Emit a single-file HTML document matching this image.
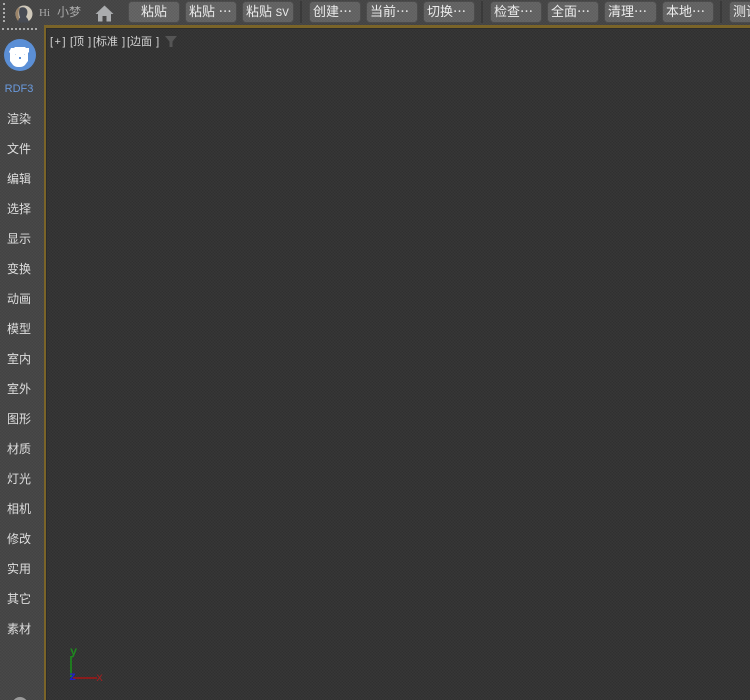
<!DOCTYPE html>
<html><head><meta charset="utf-8">
<style>
html,body{margin:0;padding:0;background:#444}
#r{position:relative;width:750px;height:700px;overflow:hidden;background:#454545;background-image:repeating-conic-gradient(rgba(255,255,255,.025) 0 25%,rgba(0,0,0,.035) 0 50%);background-size:3px 3px;font-family:"Liberation Sans","Noto Sans CJK SC",sans-serif;color:#e0e0e0}
.b{position:absolute;top:2px;height:20px;background:#626262;background-image:repeating-conic-gradient(rgba(255,255,255,.03) 0 25%,rgba(0,0,0,.03) 0 50%);background-size:3px 3px;border-radius:3px;box-shadow:0 0 0 1px #4c4c4c;font-size:13px;line-height:20px;color:#ececec;white-space:nowrap;overflow:hidden;padding-left:3px;box-sizing:border-box}
.s{position:absolute;top:1px;width:2px;height:22px;background:#3a3a3a}
.m{position:absolute;left:0;width:38px;text-align:center;font-size:12px;line-height:16px;color:#dedede;white-space:nowrap}
#v{position:absolute;left:44px;top:25px;width:706px;height:675px;box-sizing:border-box;border-left:2px solid #7a6428;border-top:3px solid #7a6428;background:#323232;background-image:repeating-conic-gradient(rgba(255,255,255,.025) 0 25%,rgba(0,0,0,.04) 0 50%);background-size:3px 3px;box-shadow:inset 1px 1px 0 #2c2c2c}
.t{position:absolute;top:35px;font-size:11px;line-height:14px;color:#d4d4d4;white-space:nowrap;word-spacing:1px}
</style></head><body><div id="r">
<div style="position:absolute;left:3px;top:3px;width:2px;height:19px;border-left:2px dotted #aaa;box-sizing:border-box"></div>
<div style="position:absolute;left:2px;top:28px;width:35px;height:2px;border-top:2px dotted #aaa;box-sizing:border-box"></div>
<svg style="position:absolute;left:14px;top:4px" width="20" height="20" viewBox="0 0 20 20"><circle cx="10" cy="10" r="8.500" fill="#cfc8ba"/><path d="M3.500 4.500C1 8 1 13 4 17l2-1C4 12 4 8 6 3z" fill="#9c8468"/><path d="M6 4c3-1.500 6-.5 7 2 1 2.500 0 5-1 7 1.500 1 2.500 3 3 5.500H4c0-2.500 1-4 2-5-1-3-1.500-7 0-9.500z" fill="#474b54"/></svg>
<div style="position:absolute;left:39px;top:6px;font:11px/14px 'Liberation Serif',serif;color:#a8a8a8">Hi</div>
<div style="position:absolute;left:57px;top:4px;font-size:12px;line-height:16px;color:#a8a8a8">小梦</div>
<svg style="position:absolute;left:95px;top:5px" width="19" height="17" viewBox="0 0 19 17"><path d="M9.500 .500 18.500 9H16v7.500h-4.500V11h-4v5.500H3V9H.500z" fill="#aaacae"/></svg>
<div class="b" style="left:129px;width:50px;text-align:center;padding:0">粘贴</div>
<div class="b" style="left:186px;width:50px">粘贴 ⋯</div>
<div class="b" style="left:243px;width:50px">粘贴 <span style="font:11px 'Liberation Mono',monospace">SV</span></div>
<div class="s" style="left:300px"></div>
<div class="b" style="left:310px;width:50px">创建⋯</div>
<div class="b" style="left:367px;width:50px">当前⋯</div>
<div class="b" style="left:424px;width:50px">切换⋯</div>
<div class="s" style="left:481px"></div>
<div class="b" style="left:491px;width:50px">检查⋯</div>
<div class="b" style="left:548px;width:50px">全面⋯</div>
<div class="b" style="left:605px;width:51px">清理⋯</div>
<div class="b" style="left:663px;width:50px">本地⋯</div>
<div class="s" style="left:720px"></div>
<div class="b" style="left:730px;width:40px">测试</div>
<div id="v"></div>
<svg style="position:absolute;left:4px;top:39px" width="32" height="32" viewBox="0 0 32 32"><circle cx="16" cy="16" r="16" fill="#5b8fd6"/><path d="M7 9h3l1-1h10l1 1h3v4l-1 1v8l-3 4q-2 2-5 2h-2q-3 0-5-2l-3-4v-8l-1-1z" fill="#fff"/><rect x="15" y="18" width="2" height="2" fill="#5b8fd6"/><rect x="11" y="15" width="1" height="1" fill="#c8d8f0"/><rect x="20" y="15" width="1" height="1" fill="#c8d8f0"/></svg>
<div class="m" style="top:81px;font-size:11px;color:#6a9ade">RDF3</div>
<div class="m" style="top:111px">渲染</div>
<div class="m" style="top:141px">文件</div>
<div class="m" style="top:171px">编辑</div>
<div class="m" style="top:201px">选择</div>
<div class="m" style="top:231px">显示</div>
<div class="m" style="top:261px">变换</div>
<div class="m" style="top:291px">动画</div>
<div class="m" style="top:321px">模型</div>
<div class="m" style="top:351px">室内</div>
<div class="m" style="top:381px">室外</div>
<div class="m" style="top:411px">图形</div>
<div class="m" style="top:441px">材质</div>
<div class="m" style="top:471px">灯光</div>
<div class="m" style="top:501px">相机</div>
<div class="m" style="top:531px">修改</div>
<div class="m" style="top:561px">实用</div>
<div class="m" style="top:591px">其它</div>
<div class="m" style="top:621px">素材</div>
<div style="position:absolute;left:12px;top:697px;width:16px;height:16px;border-radius:50%;background:#9a9a9a"></div>
<div class="t" style="left:50px;word-spacing:0;letter-spacing:1.500px">[+]</div>
<div class="t" style="left:70px">[顶 ]</div>
<div class="t" style="left:93px">[标准 ]</div>
<div class="t" style="left:127px">[边面 ]</div>
<svg style="position:absolute;left:165px;top:36px" width="12" height="11" viewBox="0 0 12 11"><path d="M0 0h12L7.500 5.500V11h-3V5.500z" fill="#555"/></svg>
<svg style="position:absolute;left:60px;top:640px" width="50" height="45" viewBox="0 0 50 45">
<path d="M11 16V37" stroke="#1f7a1f" stroke-width="2" fill="none"/>
<path d="M13 38H37" stroke="#8a1c1c" stroke-width="2" fill="none"/>
<text x="10" y="15" font-family="Liberation Mono" font-size="12" font-weight="bold" fill="#1f8a1f">y</text>
<text x="36" y="41" font-family="Liberation Mono" font-size="12" fill="#a02020">x</text>
<text x="9" y="40" font-family="Liberation Mono" font-size="12" font-weight="bold" fill="#2020d0">z</text>
</svg>
</div></body></html>
